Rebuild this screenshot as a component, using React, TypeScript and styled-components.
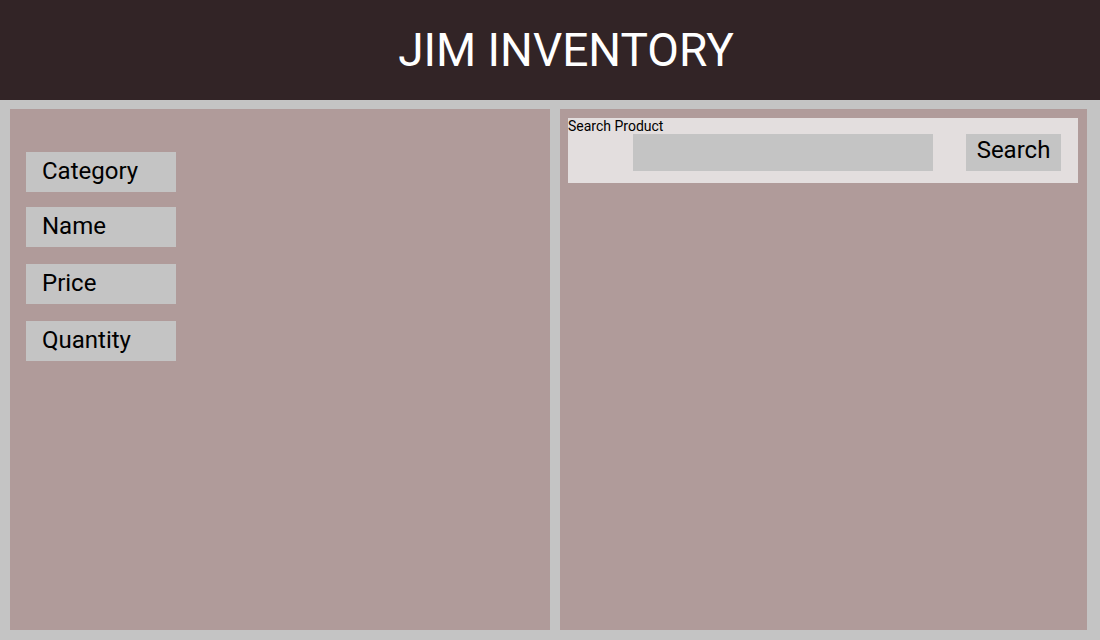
import styled, { createGlobalStyle } from "styled-components";

const GlobalStyle = createGlobalStyle`
    html, body {
        margin: 0;
        padding: 0;
        background: #c4c4c4;
        font-family: Roboto, "Noto Sans", sans-serif;
    }
    * {
        box-sizing: border-box;
    }
`;

const fields = ["Category", "Name", "Price", "Quantity"];

const App = () => {
    return (
        <Page>
            <GlobalStyle />
            <Header>
                <Title>JIM INVENTORY</Title>
            </Header>
            <Main>
                <FormPanel>
                    {fields.map((field) => (
                        <Field key={field}>{field}</Field>
                    ))}
                </FormPanel>
                <ListPanel>
                    <SearchBox>
                        <SearchLabel>Search Product</SearchLabel>
                        <SearchRow>
                            <SearchInput type="text" />
                            <SearchButton>Search</SearchButton>
                        </SearchRow>
                    </SearchBox>
                </ListPanel>
            </Main>
        </Page>
    );
};

const Page = styled.div`
    width: 1100px;
    height: 640px;
    display: flex;
    flex-direction: column;
    background: #c4c4c4;
`;

const Header = styled.header`
    height: 100px;
    background: #322426;
    display: flex;
    align-items: center;
    justify-content: center;
    padding-left: 32px;
`;

const Title = styled.h1`
    margin: 0;
    font-size: 46px;
    font-weight: 400;
    color: #ffffff;
`;

const Main = styled.main`
    flex: 1;
    display: grid;
    grid-template-columns: 540px 527px;
    gap: 10px;
    padding: 9px 13px 10px 10px;
`;

const FormPanel = styled.section`
    background: #b09b9a;
    display: flex;
    flex-direction: column;
    gap: 17px;
    padding: 43px 0 0 16px;
`;

const Field = styled.div`
    width: 150px;
    height: 40px;
    background: #c4c4c4;
    display: flex;
    align-items: center;
    padding: 0 0 2px 16px;
    font-size: 24px;
    color: #000000;

    &:first-child {
        margin-bottom: -2px;
    }
`;

const ListPanel = styled.section`
    background: #b09b9a;
    padding: 9px 9px 0 8px;
`;

const SearchBox = styled.div`
    height: 65px;
    background: #e3dede;
    display: flex;
    flex-direction: column;
`;

const SearchLabel = styled.label`
    font-size: 14px;
    line-height: 16px;
    color: #000000;
`;

const SearchRow = styled.div`
    display: flex;
    align-items: center;
    gap: 33px;
    padding-left: 65px;
`;

const SearchInput = styled.input`
    width: 300px;
    height: 37px;
    border: none;
    outline: none;
    background: #c4c4c4;
`;

const SearchButton = styled.button`
    width: 95px;
    height: 37px;
    border: none;
    padding: 0 0 6px;
    background: #c4c4c4;
    font-family: Roboto, "Noto Sans", sans-serif;
    font-size: 24px;
    color: #000000;
`;

export default App;
